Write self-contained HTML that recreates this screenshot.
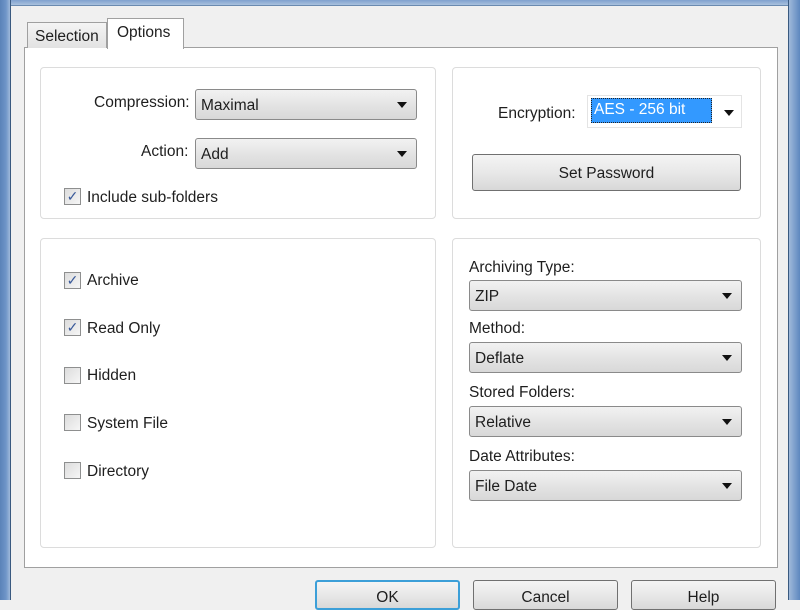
<!DOCTYPE html>
<html><head><style>
*{box-sizing:border-box;margin:0;padding:0}
body{width:800px;height:600px;overflow:hidden;background:#f0f0f0;font-family:"Liberation Sans",sans-serif;font-size:15.5px;color:#1e1e1e;position:relative}
.a{position:absolute}
.frameL{left:0;top:0;width:11px;height:600px;background:linear-gradient(90deg,#5a82b8,#6f95c8 60%,#9fb9da);border-right:1px solid #3a5a80}
.frameR{left:788px;top:0;width:12px;height:600px;background:linear-gradient(90deg,#9fb9da,#5d87bf);border-left:1px solid #3a5a80}
.frameT{left:0;top:0;width:800px;height:6px;background:linear-gradient(#7fa1cf,#a9c1de);border-bottom:1px solid #6a8ab0}
.panel{left:24px;top:47px;width:754px;height:521px;background:#fff;border:1px solid #a0a0a0}
.tab{border:1px solid #a0a0a0;border-bottom:none;padding:0 0 0 7px}
.grp{border:1px solid #dcdcdc;border-radius:4px;background:#fff}
.dd{border:1px solid #8a8a8a;border-radius:3px;background:linear-gradient(#f2f2f2,#e4e4e4 50%,#d8d8d8);height:31px;padding:7px 0 0 5px}
.dd:after{content:"";position:absolute;right:9px;top:12px;border-left:5px solid transparent;border-right:5px solid transparent;border-top:6px solid #111}
.cb{width:17px;height:17px;border:1px solid #8e8f8f;background:linear-gradient(135deg,#dcdcdc,#f6f6f6);font-size:14px;line-height:15px;text-align:center;color:#3a5a9a}
.btn{border:1px solid #707070;border-radius:3px;background:linear-gradient(#f4f4f4,#e8e8e8 50%,#d8d8d8);text-align:center}
</style></head><body>
<div class="a frameT"></div>
<div class="a frameL"></div>
<div class="a frameR"></div>
<div class="a panel"></div>
<div class="a tab" style="left:27px;top:22px;width:80px;height:26px;background:linear-gradient(#f4f4f4,#e2e2e2);padding-top:5px">Selection</div>
<div class="a tab" style="left:107px;top:18px;width:77px;height:31px;background:#fff;padding:5px 0 0 9px">Options</div>

<div class="a grp" style="left:40px;top:67px;width:396px;height:152px"></div>
<div class="a grp" style="left:452px;top:67px;width:309px;height:152px"></div>
<div class="a grp" style="left:40px;top:238px;width:396px;height:310px"></div>
<div class="a grp" style="left:452px;top:238px;width:309px;height:310px"></div>

<div class="a" style="left:94px;top:94px">Compression:</div>
<div class="a dd" style="left:195px;top:89px;width:222px">Maximal</div>
<div class="a" style="left:141px;top:143px">Action:</div>
<div class="a dd" style="left:195px;top:138px;width:222px">Add</div>
<div class="a cb" style="left:64px;top:188px">✓</div>
<div class="a" style="left:87px;top:189px">Include sub-folders</div>

<div class="a" style="left:498px;top:105px">Encryption:</div>
<div class="a" style="left:587px;top:95px;width:155px;height:33px;background:#fff;border:1px solid #e4e4e4"></div>
<div class="a" style="left:591px;top:98px;width:121px;height:25px;background:#3399ff;border:1px dotted #222;color:#fff;padding:2px 0 0 2px">AES - 256 bit</div>
<div class="a" style="left:724px;top:110px;border-left:5px solid transparent;border-right:5px solid transparent;border-top:6px solid #111"></div>
<div class="a btn" style="left:472px;top:154px;width:269px;height:37px;padding-top:10px">Set Password</div>

<div class="a cb" style="left:64px;top:272px">✓</div><div class="a" style="left:87px;top:272px">Archive</div>
<div class="a cb" style="left:64px;top:319px">✓</div><div class="a" style="left:87px;top:320px">Read Only</div>
<div class="a cb" style="left:64px;top:367px"></div><div class="a" style="left:87px;top:367px">Hidden</div>
<div class="a cb" style="left:64px;top:414px"></div><div class="a" style="left:87px;top:415px">System File</div>
<div class="a cb" style="left:64px;top:462px"></div><div class="a" style="left:87px;top:463px">Directory</div>

<div class="a" style="left:469px;top:259px">Archiving Type:</div>
<div class="a dd" style="left:469px;top:280px;width:273px">ZIP</div>
<div class="a" style="left:469px;top:320px">Method:</div>
<div class="a dd" style="left:469px;top:342px;width:273px">Deflate</div>
<div class="a" style="left:469px;top:384px">Stored Folders:</div>
<div class="a dd" style="left:469px;top:406px;width:273px">Relative</div>
<div class="a" style="left:469px;top:448px">Date Attributes:</div>
<div class="a dd" style="left:469px;top:470px;width:273px">File Date</div>

<div class="a btn" style="left:315px;top:580px;width:145px;height:30px;border:2px solid #3c9fd8;padding-top:7px">OK</div>
<div class="a btn" style="left:473px;top:580px;width:145px;height:30px;padding-top:8px">Cancel</div>
<div class="a btn" style="left:631px;top:580px;width:145px;height:30px;padding-top:8px">Help</div>
</body></html>
